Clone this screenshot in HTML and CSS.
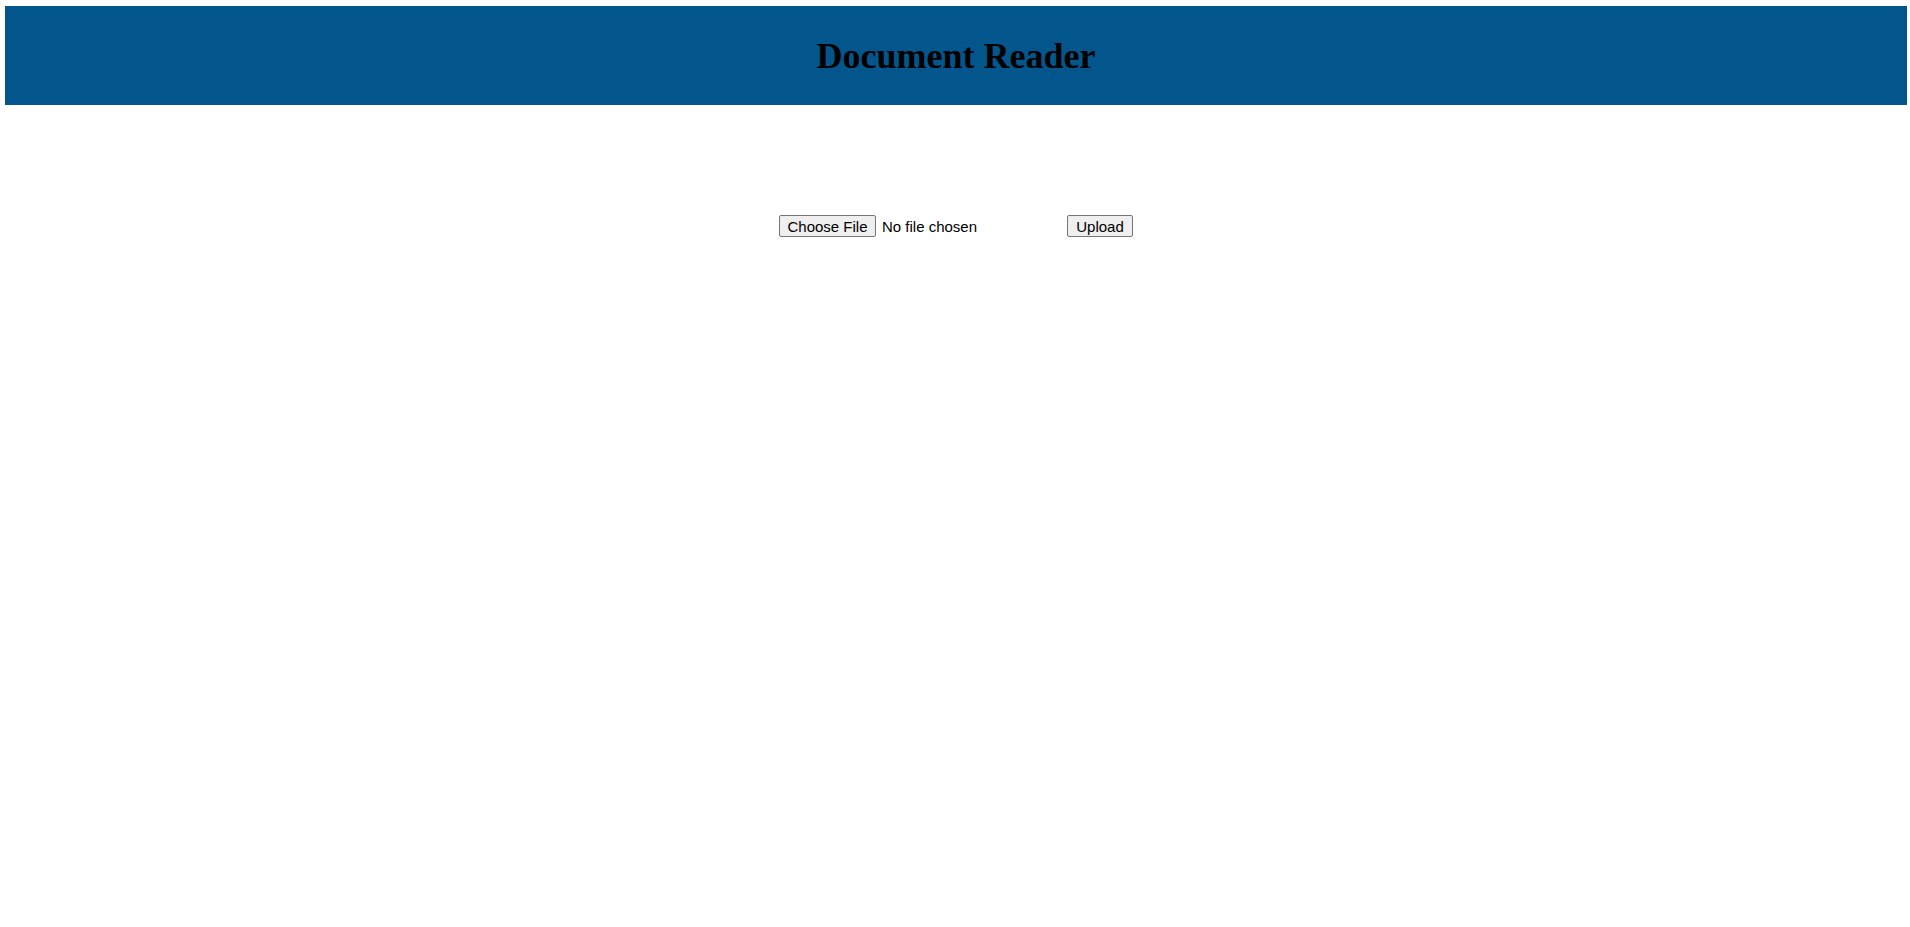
FILE: index.html
```html
<!DOCTYPE html>
<html lang="en">
<head>
<meta charset="utf-8">
<title>Document Reader</title>
<link rel="stylesheet" href="styles.css">
</head>
<body>
<header class="site-header">
  <h1 class="site-title">Document Reader</h1>
</header>
<main class="content">
  <form class="upload-form">
    <label class="file-picker">
      <input class="file-input" type="file" name="document">
      <span class="btn btn-choose">Choose File</span>
      <span class="file-name">No file chosen</span>
    </label>
    <button class="btn btn-upload" type="button">Upload</button>
  </form>
</main>
</body>
</html>
```

FILE: styles.css
```css
html, body {
  margin: 0;
  padding: 0;
  background: #ffffff;
}

body {
  font-family: "Liberation Serif", "Times New Roman", serif;
  color: #000;
}

.site-header {
  margin: 6px 3px 0 5px;
  height: 99px;
  background: #03568c;
  display: flex;
  align-items: center;
  justify-content: center;
}

.site-title {
  margin: 0;
  font-size: 36px;
  font-weight: bold;
  color: #000;
}

.content {
  padding: 110px 3px 0 5px;
}

.upload-form {
  display: flex;
  justify-content: center;
  align-items: center;
  gap: 4px;
  font-family: "Liberation Sans", Arial, sans-serif;
  font-size: 15px;
}

.file-picker {
  width: 284px;
  display: flex;
  align-items: center;
  gap: 6px;
  cursor: pointer;
}

.file-input {
  display: none;
}

.btn {
  box-sizing: border-box;
  height: 22px;
  display: inline-flex;
  align-items: center;
  justify-content: center;
  background: #efefef;
  border: 1px solid #767676;
  border-radius: 2px;
  font-family: "Liberation Sans", Arial, sans-serif;
  font-size: 15px;
  color: #000;
  padding: 0;
  line-height: 1;
}

.btn-choose {
  width: 97px;
}

.btn-upload {
  width: 66px;
}

.file-name {
  color: #000;
  white-space: nowrap;
}
```
